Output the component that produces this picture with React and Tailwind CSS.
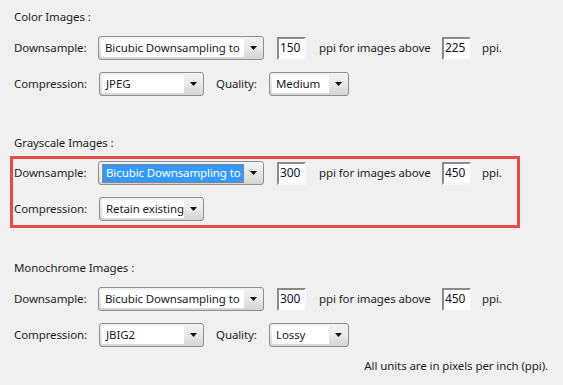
import React from "react";

const FONT = { fontFamily: '"Noto Sans", "Open Sans", sans-serif' };

function Combo({ value, width, selected = false }) {
  return (
    <div
      className={`flex h-[24px] shrink-0 rounded-[3px] border border-[#8e8f8f] bg-gradient-to-b from-[#f2f2f2] via-[#e9e9e9] to-[#d4d4d4] ${width}`}
    >
      <div className="m-[2px] mr-0 flex min-w-0 flex-1 items-center bg-white">
        {selected ? (
          <span className="ml-px flex h-[19px] flex-1 items-center border border-dotted border-[#d6701e] bg-[#3399ff] pl-[3px] text-white">
            {value}
          </span>
        ) : (
          <span className="pl-[4px] text-[#1a1a1a]">{value}</span>
        )}
      </div>
      <div className="flex w-[19px] items-center justify-center">
        <svg width="7" height="4" viewBox="0 0 7 4">
          <path d="M0 0h7L3.5 4z" fill="#111" />
        </svg>
      </div>
    </div>
  );
}

function NumBox({ value }) {
  return (
    <div className="flex h-[23px] w-[29px] shrink-0 items-center border-2 border-t-[#8a8a8a] border-l-[#8a8a8a] border-r-[#f7f7f7] border-b-[#f7f7f7] bg-white pl-px text-[12px] text-[#101030]">
      {value}
    </div>
  );
}

function DownsampleRow({ res, above, selected }) {
  return (
    <div className="flex h-[24px] items-center">
      <span className="w-[84px] shrink-0">Downsample:</span>
      <Combo value="Bicubic Downsampling to" width="w-[166px]" selected={selected} />
      <div className="ml-[13px]">
        <NumBox value={res} />
      </div>
      <span className="ml-[13px] w-[123px] shrink-0">ppi for images above</span>
      <NumBox value={above} />
      <span className="ml-[11px]">ppi.</span>
    </div>
  );
}

function CompressionRow({ value, quality }) {
  return (
    <div className="flex h-[24px] items-center">
      <span className="w-[85px] shrink-0">Compression:</span>
      <Combo value={value} width="w-[105px]" />
      {quality && (
        <>
          <span className="ml-[12px] w-[53px] shrink-0">Quality:</span>
          <Combo value={quality} width="w-[80px]" />
        </>
      )}
    </div>
  );
}

export default function App() {
  return (
    <div
      className="h-[385px] w-[563px] overflow-hidden whitespace-nowrap bg-[#f0f0f0] pt-[9px] text-[11.5px] leading-[16px] tracking-[-0.1px] text-[#1e1e1e]"
      style={FONT}
    >
      {/* Color */}
      <div className="pl-[14px]">
        <div>Color Images :</div>
        <div className="mt-[11px]">
          <DownsampleRow res="150" above="225" />
        </div>
        <div className="mt-[12px]">
          <CompressionRow value="JPEG" quality="Medium" />
        </div>
      </div>

      {/* Grayscale */}
      <div className="mt-[39px] pl-[14px]">Grayscale Images :</div>
      <div className="ml-[10px] mt-[5px] w-[510px] border-[3px] border-[#e84a47] pb-[4px] pl-[1px] pt-[2px]">
        <DownsampleRow res="300" above="450" selected />
        <div className="mt-[12px]">
          <CompressionRow value="Retain existing" />
        </div>
      </div>

      {/* Monochrome */}
      <div className="mt-[32px] pl-[14px]">
        <div>Monochrome Images :</div>
        <div className="mt-[11px]">
          <DownsampleRow res="300" above="450" />
        </div>
        <div className="mt-[12px]">
          <CompressionRow value="JBIG2" quality="Lossy" />
        </div>
      </div>

      <div className="mt-[11px] pr-[15px] text-right">All units are in pixels per inch (ppi).</div>
    </div>
  );
}
